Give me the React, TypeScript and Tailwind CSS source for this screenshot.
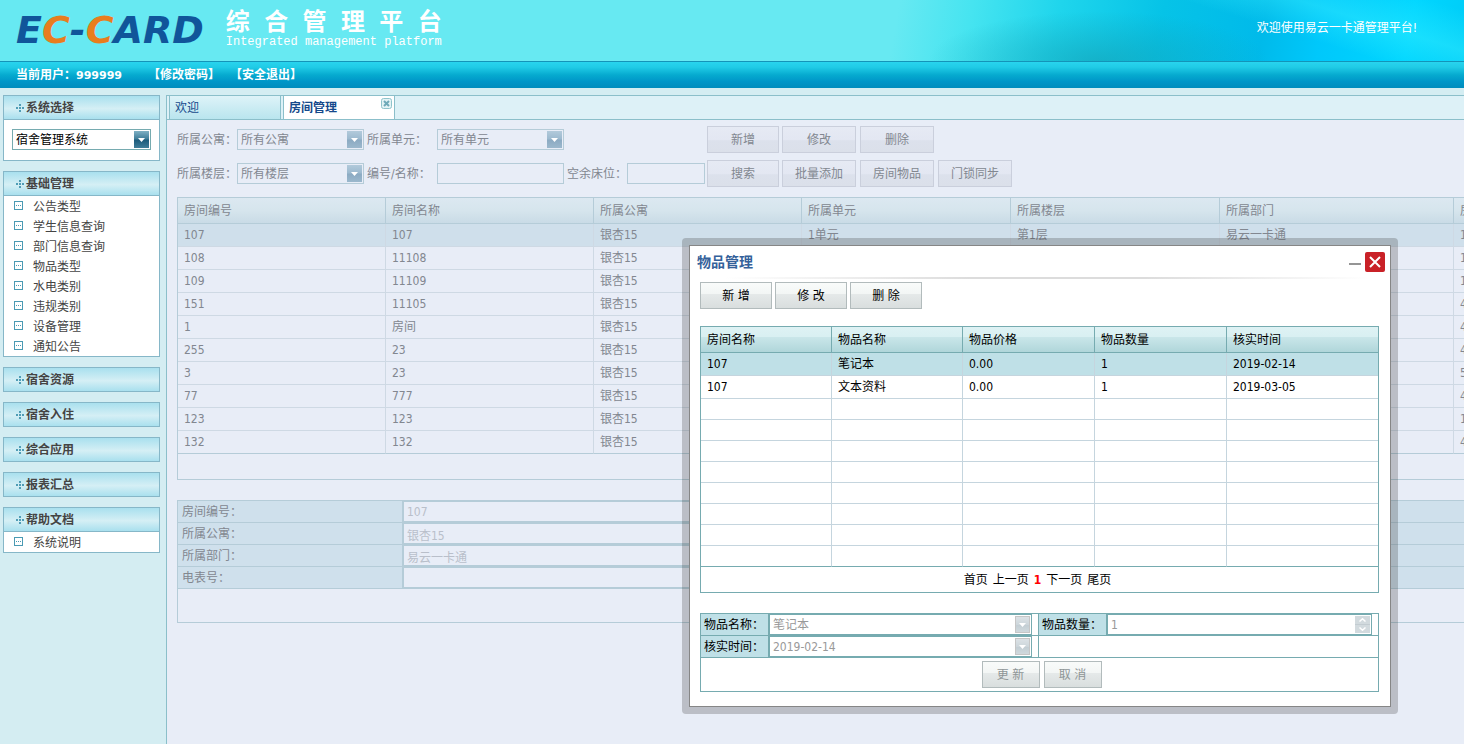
import React from "react";

const PANEL_HEAD =
  "flex h-[23px] w-full items-center gap-px pl-3 text-left font-bold text-[#444] bg-[linear-gradient(180deg,#a9e0ee_0%,#d5eff5_55%,#a9e0ee_100%)]";

function PlusDots() {
  return (
    <svg width="9" height="8" viewBox="0 0 9 8" fill="#4f9db6" aria-hidden="true" shapeRendering="crispEdges">
      <rect x="3" y="0" width="2" height="2" />
      <rect x="0" y="3" width="2" height="2" />
      <rect x="3" y="3" width="2" height="2" />
      <rect x="6" y="3" width="2" height="2" />
      <rect x="3" y="6" width="2" height="2" />
    </svg>
  );
}

function ItemIcon() {
  return (
    <svg className="mt-[5px]" width="9" height="9" viewBox="0 0 9 9" aria-hidden="true" shapeRendering="crispEdges">
      <path d="M0 0h9v9H0z" fill="#4a9ab3" />
      <path d="M1 1h7v7H1z" fill="#fff" />
      <rect x="2" y="4" width="1" height="1" fill="#4a9ab3" />
      <rect x="4" y="4" width="1" height="1" fill="#4a9ab3" />
      <rect x="6" y="4" width="1" height="1" fill="#4a9ab3" />
    </svg>
  );
}

function SidePanel({ title, items, children }: { title: string; items?: string[]; children?: React.ReactNode }) {
  return (
    <section className="border border-[#86b7c8] bg-white">
      <button type="button" className={PANEL_HEAD}>
        <PlusDots />
        {title}
      </button>
      {items && (
        <ul className="border-t border-[#86b7c8]">
          {items.map((item) => (
            <li key={item}>
              <a href="#" className="flex h-5 items-start gap-2.5 pl-2.5 leading-[22px] text-[#444]">
                <ItemIcon />
                {item}
              </a>
            </li>
          ))}
        </ul>
      )}
      {children}
    </section>
  );
}

type Tone = "active" | "masked" | "disabled";

const SELECT_TONES: Record<Tone, { box: string; arrow: string }> = {
  active: {
    box: "border-[#76abb0] bg-white text-black",
    arrow: "bg-[linear-gradient(180deg,#7fb0c4_0%,#417f9b_45%,#1d5c7c_55%,#3f7d99_100%)]",
  },
  masked: {
    box: "border-[#b5ccd8] bg-[#e8edf7] text-[#828790]",
    arrow: "bg-[linear-gradient(180deg,#b2cadb_0%,#9dbacf_45%,#8cabc3_55%,#9bb8cd_100%)]",
  },
  disabled: {
    box: "border-[#76abb0] bg-white text-[#999]",
    arrow: "border border-[#c6c6c6] bg-[linear-gradient(180deg,#dce2e6_0%,#cdd6db_50%,#c3ced4_55%,#d0d9dd_100%)]",
  },
};

function Select({ id, value, tone, label }: { id: string; value: string; tone: Tone; label?: string }) {
  const t = SELECT_TONES[tone];
  return (
    <span className="relative block h-[21px] w-full">
      <select
        id={id}
        aria-label={label}
        disabled={tone === "disabled"}
        className={"block h-full w-full appearance-none border pt-0.5 pb-0 pl-[3px] pr-5 text-xs leading-[17px] disabled:opacity-100 " + t.box}
      >
        <option>{value}</option>
      </select>
      <span
        className={"pointer-events-none absolute right-0.5 top-0.5 flex h-[17px] w-[15px] items-center justify-center " + t.arrow}
      >
        <svg width="7" height="4" viewBox="0 0 7 4" fill="#fff" aria-hidden="true">
          <path d="M0 0h7L3.500 4z" />
        </svg>
      </span>
    </span>
  );
}

function MaskedButton({ children, className }: { children: React.ReactNode; className: string }) {
  return (
    <button
      type="button"
      className={
        "h-[27px] border border-[#cacfdc] bg-[linear-gradient(180deg,#e6eaf4_0%,#e3e7f2_50%,#dce1ec_55%,#dbe0ea_100%)] text-[#828790] " +
        className
      }
    >
      {children}
    </button>
  );
}

function DialogButton({ children, className, disabled }: { children: React.ReactNode; className: string; disabled?: boolean }) {
  return (
    <button
      type="button"
      disabled={disabled}
      className={
        "h-[27px] border border-[#b2bbbc] bg-[linear-gradient(180deg,#f9fbfa_0%,#f3f6f5_42%,#e5e9e9_46%,#d9dede_100%)] " + className
      }
    >
      {children}
    </button>
  );
}

const ROOM_COLUMNS = ["房间编号", "房间名称", "所属公寓", "所属单元", "所属楼层", "所属部门", "房间类型"];

const ROOMS: string[][] = [
  ["107", "107", "银杏15", "1单元", "第1层", "易云一卡通", "1"],
  ["108", "11108", "银杏15", "", "", "", "1"],
  ["109", "11109", "银杏15", "", "", "", "1"],
  ["151", "11105", "银杏15", "", "", "", "4"],
  ["1", "房间", "银杏15", "", "", "", "4"],
  ["255", "23", "银杏15", "", "", "", "4"],
  ["3", "23", "银杏15", "", "", "", "5"],
  ["77", "777", "银杏15", "", "", "", "4"],
  ["123", "123", "银杏15", "", "", "", "1"],
  ["132", "132", "银杏15", "", "", "", "4"],
];

const DETAILS = [
  { label: "房间编号：", value: "107" },
  { label: "所属公寓：", value: "银杏15" },
  { label: "所属部门：", value: "易云一卡通" },
  { label: "电表号：", value: "" },
];

const ITEM_COLUMNS = ["房间名称", "物品名称", "物品价格", "物品数量", "核实时间"];

const ITEMS: string[][] = [
  ["107", "笔记本", "0.00", "1", "2019-02-14"],
  ["107", "文本资料", "0.00", "1", "2019-03-05"],
];

const EMPTY_ROWS = [0, 1, 2, 3, 4, 5, 6, 7];

function Header() {
  return (
    <header className="shrink-0">
      <div className="flex h-[61px] items-start justify-between bg-[radial-gradient(ellipse_170px_50px_at_75%_100%,rgba(20,160,180,0.6)_0%,rgba(20,160,180,0)_100%),linear-gradient(17deg,rgba(60,240,255,0)_83%,rgba(60,240,255,0.4)_90%,rgba(60,240,255,0)_98%),linear-gradient(100deg,#67e9f2_61%,#46e4f0_66%,#1fd5ec_72%,#06c3e7_79%,#00baea_86%,#00c8fb_90%,#00d6ff_96%,#00cdf8_100%)]">
        <div className="flex pl-4">
          <div className="pt-2 font-['DejaVu_Sans'] text-[38px] leading-[44px] font-bold italic text-[#10559a]" aria-label="EC-CARD">
            E<span className="text-[#e87d1e]">C</span>-<span className="text-[#e87d1e]">C</span>ARD
          </div>
          <div className="flex flex-col pl-[22px] pt-3 font-['Liberation_Mono','Noto_Sans_CJK_SC',monospace] text-white">
            <h1 className="text-2xl leading-6 font-bold whitespace-nowrap">综 合 管 理 平 台</h1>
            <p className="text-xs leading-3">Integrated management platform</p>
          </div>
        </div>
        <p className="pr-[47px] pt-5 leading-4 text-white">欢迎使用易云一卡通管理平台!</p>
      </div>
      <div className="flex h-[27px] items-center border-t border-[#1494b8] bg-[linear-gradient(180deg,#28d4ee_0%,#20cbe6_20%,#06aacf_50%,#0096c8_75%,#008cbd_100%)] pl-4 font-bold text-white">
        <span>
          当前用户：<span className="font-['DejaVu_Sans'] text-[11px]">999999</span>
        </span>
        <a href="#" className="ml-[26px]">
          【修改密码】
        </a>
        <a href="#" className="ml-2.5">
          【安全退出】
        </a>
      </div>
    </header>
  );
}

function Sidebar() {
  return (
    <nav className="flex w-[166px] shrink-0 flex-col gap-2.5 bg-[#d4edf2] pl-[3px] pr-1.5">
      <SidePanel title="系统选择">
        <div className="border-t border-[#86b7c8] px-2 pt-[9px] pb-2.5">
          <Select id="system" label="系统选择" value="宿舍管理系统" tone="active" />
        </div>
      </SidePanel>
      <SidePanel
        title="基础管理"
        items={["公告类型", "学生信息查询", "部门信息查询", "物品类型", "水电类别", "违规类别", "设备管理", "通知公告"]}
      />
      <SidePanel title="宿舍资源" />
      <SidePanel title="宿舍入住" />
      <SidePanel title="综合应用" />
      <SidePanel title="报表汇总" />
      <SidePanel title="帮助文档" items={["系统说明"]} />
    </nav>
  );
}

function Tabs() {
  return (
    <div className="flex h-[25px] gap-0.5 border-y border-[#8bbfca] bg-[#ddf1f7] pl-0.5">
      <button
        type="button"
        className="flex w-28 items-center border-x border-[#8bbfca] bg-[linear-gradient(180deg,#def3f8_0%,#b9e5ee_100%)] pl-[5px] text-[#15498b]"
      >
        欢迎
      </button>
      <div className="flex w-28 items-start justify-between border-x border-[#8bbfca] bg-white pl-[5px] pr-0.5">
        <button type="button" className="h-full font-bold text-[#15498b]">
          房间管理
        </button>
        <button type="button" aria-label="关闭" className="pt-0.5">
          <svg width="11" height="11" viewBox="0 0 11 11" aria-hidden="true">
            <rect x="0.5" y="0.5" width="10" height="10" rx="2" fill="#e3f3f5" stroke="#8fc3cb" />
            <path d="M3 3l5 5M8 3l-5 5" stroke="#6fa9b8" strokeWidth="2" />
          </svg>
        </button>
      </div>
    </div>
  );
}

function Filters() {
  const field = "h-[21px] border border-[#b5ccd8] bg-[#e8edf7] px-1";
  return (
    <form className="grid grid-cols-[60px_130px_70px_130px_60px_80px_75px_78px_78px_78px] items-center gap-y-[7px]">
      <label htmlFor="apartment">所属公寓：</label>
      <div className="pr-[3px]">
        <Select id="apartment" value="所有公寓" tone="masked" />
      </div>
      <label htmlFor="unit">所属单元：</label>
      <div className="pr-[3px]">
        <Select id="unit" value="所有单元" tone="masked" />
      </div>
      <MaskedButton className="col-start-7 w-[72px]">新增</MaskedButton>
      <MaskedButton className="w-[74px]">修改</MaskedButton>
      <MaskedButton className="w-[74px]">删除</MaskedButton>
      <label htmlFor="floor" className="col-start-1">
        所属楼层：
      </label>
      <div className="pr-[3px]">
        <Select id="floor" value="所有楼层" tone="masked" />
      </div>
      <label htmlFor="code">编号/名称：</label>
      <input id="code" type="text" className={field + " w-[127px]"} />
      <label htmlFor="beds">空余床位：</label>
      <input id="beds" type="text" className={field + " w-[78px]"} />
      <MaskedButton className="w-[72px]">搜索</MaskedButton>
      <MaskedButton className="w-[74px]">批量添加</MaskedButton>
      <MaskedButton className="w-[74px]">房间物品</MaskedButton>
      <MaskedButton className="w-[74px]">门锁同步</MaskedButton>
    </form>
  );
}

function RoomTable() {
  return (
    <div className="mt-2.5 w-[1512px] border border-[#b5ccd8]">
      <table className="w-full table-fixed border-separate border-spacing-0">
        <colgroup>
          <col className="w-[208px]" />
          <col className="w-[208px]" />
          <col className="w-[208px]" />
          <col className="w-[209px]" />
          <col className="w-[209px]" />
          <col className="w-[234px]" />
          <col />
        </colgroup>
        <thead>
          <tr className="h-[26px]">
            {ROOM_COLUMNS.map((c) => (
              <th
                key={c}
                className="border-r border-b border-[#b5ccd8] bg-[linear-gradient(180deg,#dce8f1_0%,#d6e5ed_50%,#c9dbe6_100%)] p-0 pl-1.5 text-left font-normal"
              >
                {c}
              </th>
            ))}
          </tr>
        </thead>
        <tbody>
          {ROOMS.map((row, i) => (
            <tr key={row[0]} className={i === 0 ? "h-[23px] bg-[#cfdfeb]" : "h-[23px]"}>
              {row.map((v, j) => (
                <td
                  key={j}
                  className={
                    "border-r border-b p-0 pl-1.5 border-r-[#ced9e4] " +
                    (i === ROOMS.length - 1 ? "border-b-[#b5ccd8]" : "border-b-[#ced9e4]")
                  }
                >
                  {v}
                </td>
              ))}
            </tr>
          ))}
        </tbody>
      </table>
      <div className="h-[25px]" />
    </div>
  );
}

function RoomDetails() {
  return (
    <form className="mt-5 w-[1512px] border border-[#b5ccd8]">
      {DETAILS.map((d, i) => (
        <div key={d.label} className="grid h-[22px] grid-cols-[225px_880px_1fr] border-b border-[#b5ccd8]">
          <label htmlFor={"detail" + i} className="flex items-center border-r border-[#b5ccd8] bg-[#cfe0ec] pl-1">
            {d.label}
          </label>
          <input
            id={"detail" + i}
            type="text"
            defaultValue={d.value}
            className="h-[21px] w-full border border-[#b5ccd8] bg-[#e8edf7] px-[3px] pt-px text-[#b9bfca]"
          />
          <div className="border-l border-[#b5ccd8] bg-[#cfe0ec]" />
        </div>
      ))}
      <div className="h-[33px]" />
    </form>
  );
}

function ItemTable() {
  const cell = "border-b border-[#c5d5de] p-0 pl-1.5";
  return (
    <div className="mt-[17px] border border-[#76abb0]">
      <table className="w-full table-fixed border-separate border-spacing-0">
        <colgroup>
          <col className="w-[131px]" />
          <col className="w-[131px]" />
          <col className="w-[132px]" />
          <col className="w-[132px]" />
          <col />
        </colgroup>
        <thead>
          <tr className="h-[26px]">
            {ITEM_COLUMNS.map((c) => (
              <th
                key={c}
                className="border-r border-b border-[#76abb0] bg-[linear-gradient(180deg,#def2f4_0%,#d9f0f2_38%,#c9e6e9_42%,#b0d6da_100%)] p-0 pl-1.5 text-left font-normal last:border-r-0"
              >
                {c}
              </th>
            ))}
          </tr>
        </thead>
        <tbody>
          {ITEMS.map((row, i) => (
            <tr key={row[1]} className={i === 0 ? "h-[23px] bg-[#bfe0e7]" : "h-[23px]"}>
              {row.map((v, j) => (
                <td key={j} className={cell + " border-r last:border-r-0"}>
                  {v}
                </td>
              ))}
            </tr>
          ))}
          {EMPTY_ROWS.map((r) => (
            <tr key={r} className="h-[21px]">
              {ITEM_COLUMNS.map((c) => (
                <td
                  key={c}
                  className={
                    "border-r border-b p-0 border-r-[#c5d5de] last:border-r-0 " +
                    (r === EMPTY_ROWS.length - 1 ? "border-b-[#76abb0]" : "border-b-[#c5d5de]")
                  }
                />
              ))}
            </tr>
          ))}
        </tbody>
      </table>
      <div className="flex h-[25px] items-center justify-center gap-[5px] pr-1">
        <a href="#">首页</a>
        <a href="#">上一页</a>
        <span className="font-bold text-[#f00]">1</span>
        <a href="#">下一页</a>
        <a href="#">尾页</a>
      </div>
    </div>
  );
}

function ItemForm() {
  const label = "flex items-center border-r border-[#76abb0] bg-[#bfe0e7] pl-[3px]";
  return (
    <form className="mt-5 border border-[#76abb0]">
      <div className="grid h-[22px] grid-cols-[68px_270px_68px_1fr] border-b border-[#76abb0]">
        <label htmlFor="item-name" className={label}>
          物品名称：
        </label>
        <div className="border-r border-[#76abb0] pr-1.5">
          <Select id="item-name" value="笔记本" tone="disabled" />
        </div>
        <label htmlFor="item-count" className={label}>
          物品数量：
        </label>
        <div className="pr-1.5">
          <span className="relative block">
            <input
              id="item-count"
              type="text"
              inputMode="numeric"
              disabled
              defaultValue="1"
              className="block h-[21px] w-full border border-[#76abb0] bg-white px-[3px] pt-px text-[#999]"
            />
            <span className="absolute right-0.5 top-0.5 flex h-[17px] w-[15px] flex-col justify-between bg-[#c3ccd1]">
              <span className="flex h-2 items-center justify-center bg-[#d2dade]">
                <svg width="7" height="4" viewBox="0 0 7 4" fill="none" stroke="#fff" strokeWidth="1.500" aria-hidden="true">
                  <path d="M0.500 3.500L3.500 0.800l3 2.700" />
                </svg>
              </span>
              <span className="flex h-2 items-center justify-center bg-[#d2dade]">
                <svg width="7" height="4" viewBox="0 0 7 4" fill="none" stroke="#fff" strokeWidth="1.500" aria-hidden="true">
                  <path d="M0.500 0.500L3.500 3.200l3-2.700" />
                </svg>
              </span>
            </span>
          </span>
        </div>
      </div>
      <div className="grid h-[22px] grid-cols-[68px_270px_1fr] border-b border-[#76abb0]">
        <label htmlFor="item-date" className={label}>
          核实时间：
        </label>
        <div className="border-r border-[#76abb0] pr-1.5">
          <Select id="item-date" value="2019-02-14" tone="disabled" />
        </div>
      </div>
      <div className="flex h-[33px] items-center justify-center gap-1 pl-1">
        <DialogButton className="w-[58px] text-[#8e9596]" disabled>
          更 新
        </DialogButton>
        <DialogButton className="w-[58px] text-[#8e9596]" disabled>
          取 消
        </DialogButton>
      </div>
    </form>
  );
}

function ItemDialog() {
  return (
    <div role="dialog" aria-label="物品管理" className="absolute top-[238px] left-[682px] w-[716px] rounded bg-[#333]/25 p-[7px]">
      <div className="border border-[#868686] bg-white pb-[14px] text-black">
        <div className="flex h-[31px] items-center justify-between pl-[7px] pr-[5px]">
          <h2 className="text-sm font-bold text-[#34619a]">物品管理</h2>
          <div className="flex items-center gap-1">
            <button type="button" aria-label="最小化" className="flex h-5 w-3 items-center">
              <span className="mt-1 h-0.5 w-full bg-[#959595]" />
            </button>
            <button type="button" aria-label="关闭" className="flex size-5 items-center justify-center rounded-xs bg-[#c92127]">
              <svg width="12" height="12" viewBox="0 0 12 12" stroke="#fff" strokeWidth="2" aria-hidden="true">
                <path d="M1 1l10 10M11 1L1 11" />
              </svg>
            </button>
          </div>
        </div>
        <div className="h-0.5 bg-[linear-gradient(90deg,#fff_5%,#dcdcdc_40%,#dcdcdc_65%,#fff_97%)]" />
        <div className="pl-2.5 pr-[11px] pt-[3px]">
          <div className="flex gap-[3px]">
            <DialogButton className="w-[72px]">新 增</DialogButton>
            <DialogButton className="w-[72px]">修 改</DialogButton>
            <DialogButton className="w-[72px]">删 除</DialogButton>
          </div>
          <ItemTable />
          <ItemForm />
        </div>
      </div>
    </div>
  );
}

export default function App() {
  return (
    <div className="relative flex min-h-screen flex-col overflow-hidden bg-[#d0ecec] font-['DejaVu_Sans_Condensed','Noto_Sans_CJK_SC',sans-serif] text-xs leading-4">
      <Header />
      <div className="flex grow bg-[#d4edf2] pt-[7px]">
        <Sidebar />
        <main className="min-w-0 grow overflow-hidden border-l border-[#8bbfca] bg-[#e8edf7] text-[#828790]">
          <Tabs />
          <div className="pl-2.5 pt-1.5">
            <Filters />
            <RoomTable />
            <RoomDetails />
          </div>
        </main>
      </div>
      <ItemDialog />
    </div>
  );
}
